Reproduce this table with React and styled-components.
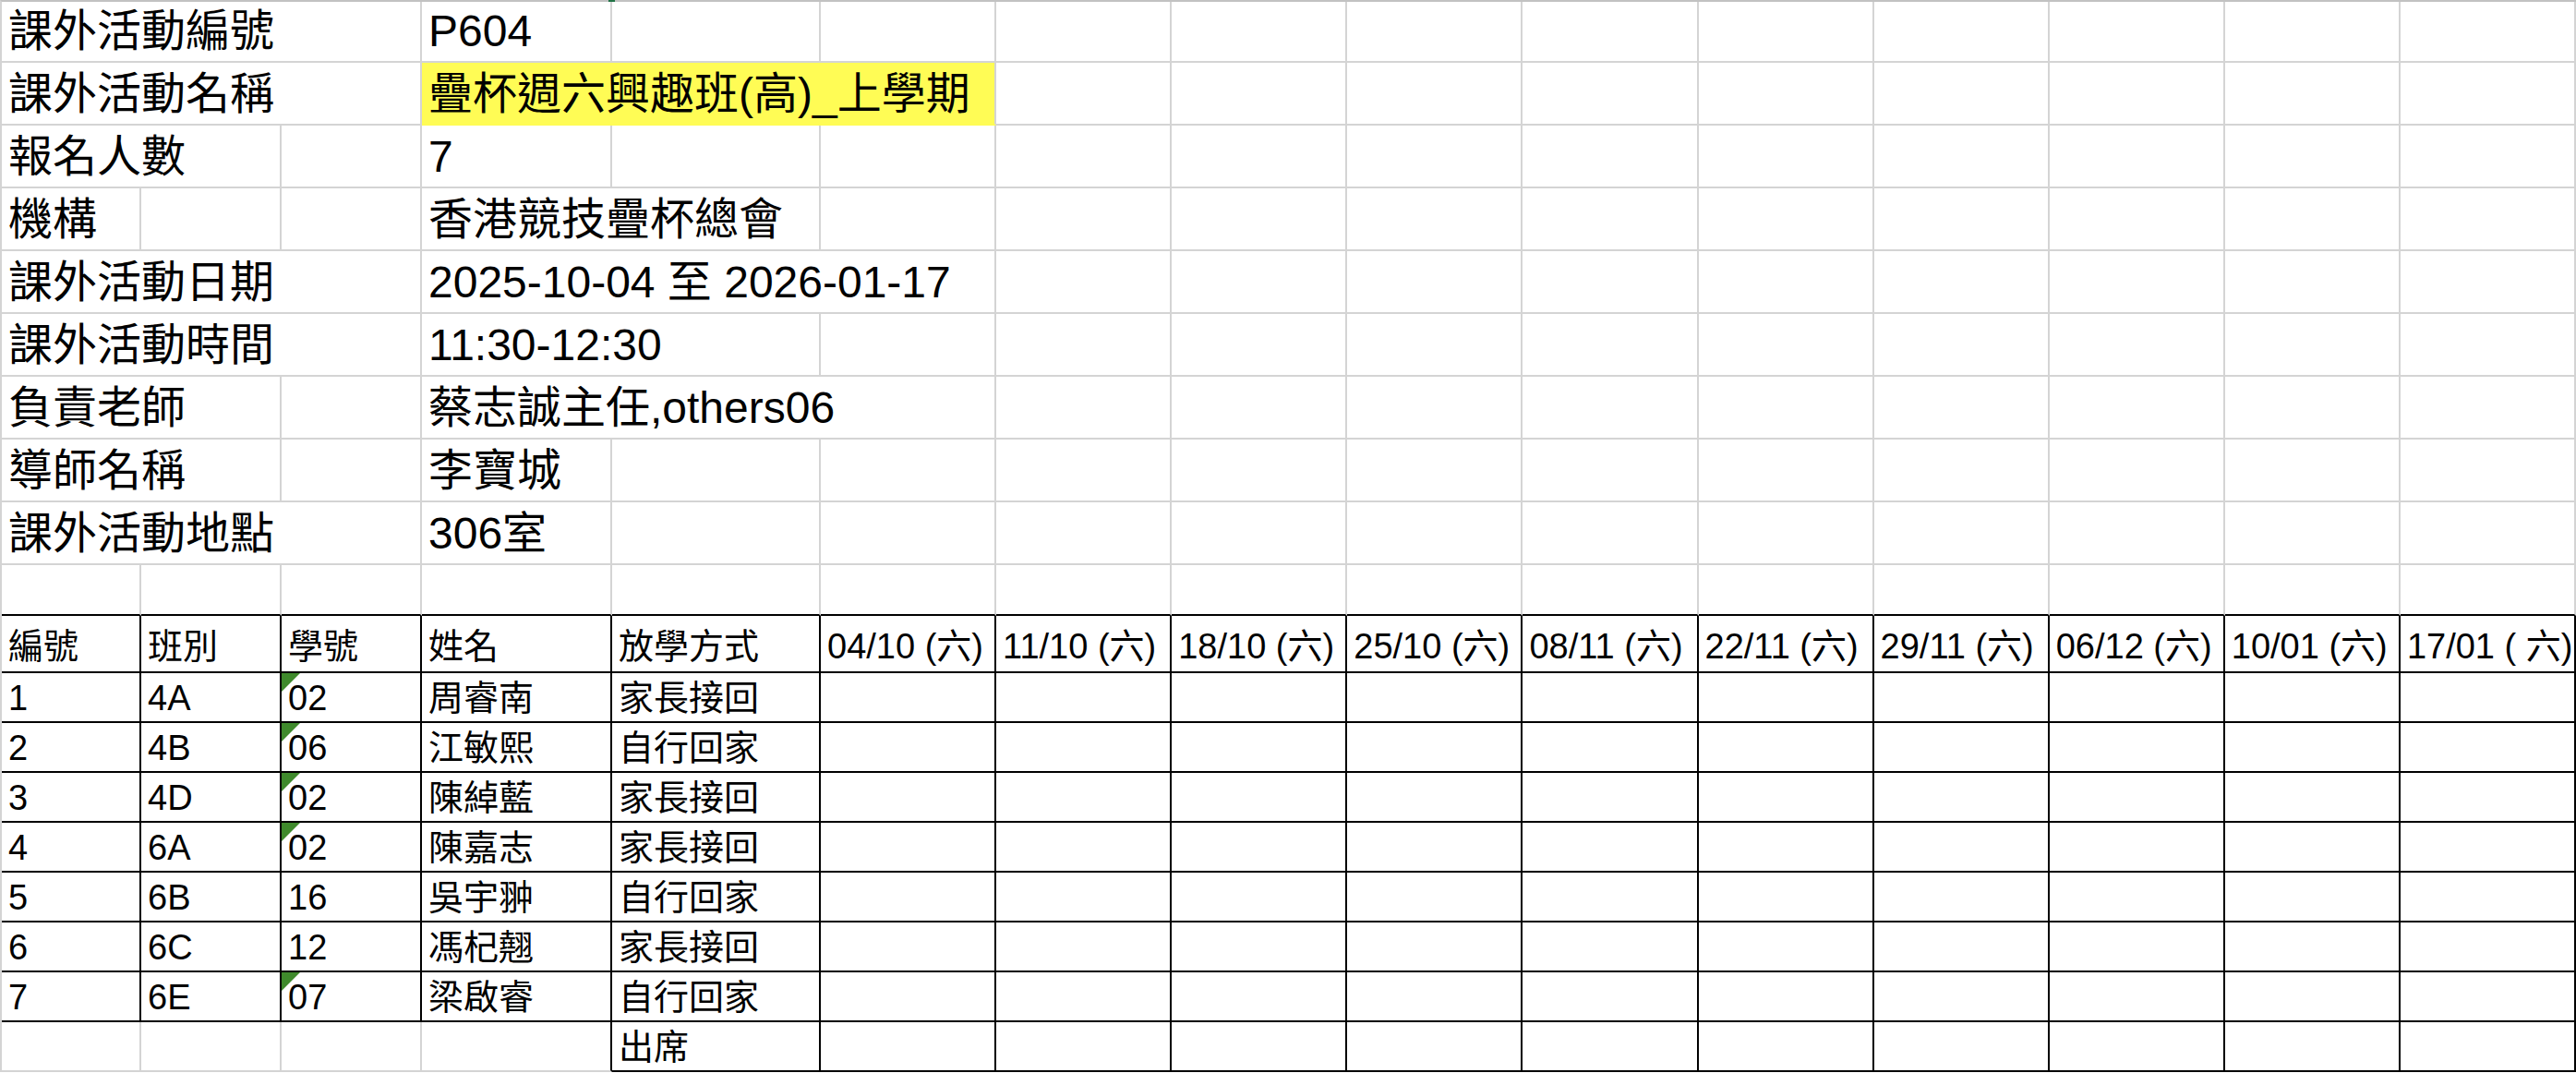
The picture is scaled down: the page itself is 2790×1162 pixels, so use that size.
import React from 'react'
import styled, { createGlobalStyle, css } from 'styled-components'

const GRID = '#d4d4d4'
const INK = '#000'

const GlobalStyle = createGlobalStyle`
  html, body {
    margin: 0;
    padding: 0;
    background: #fff;
    overflow: hidden;
  }
  body {
    font-family: "Liberation Sans", "Noto Sans CJK TC", sans-serif;
    color: #000;
  }
`

const Sheet = styled.div`
  position: relative;
  box-sizing: border-box;
  width: 2790px;
  border-top: 2px solid #c2c2c2;
  border-left: 2px solid ${GRID};
  display: grid;
  grid-template-columns: 151px 152px 152px 206px 226px repeat(10, 1fr);
  grid-template-rows: 66px repeat(8, 68px) 55px 62px repeat(8, 54px);
`

// little green tick Excel draws on the selected column edge
const Marker = styled.div`
  position: absolute;
  top: -2px;
  left: 657px;
  width: 7px;
  height: 2px;
  background: #217346;
`

const Cell = styled.div`
  position: relative;
  box-sizing: border-box;
  grid-column: span ${p => p.$span || 1};
  display: flex;
  align-items: flex-end;
  padding-left: 7px;
  border-right: 2px solid ${p => p.$right || GRID};
  border-bottom: 2px solid ${p => p.$bottom || GRID};
  background: ${p => p.$bg || 'transparent'};
  line-height: 1;
  white-space: nowrap;
  min-width: 0;

  ${p => p.$flag && css`
    &::before {
      content: '';
      position: absolute;
      left: 0;
      top: 0;
      width: 20px;
      height: 20px;
      background: #3f8a2c;
      clip-path: polygon(0 0, 100% 0, 0 100%);
    }
  `}
`

const InfoCell = styled(Cell)`
  font-size: 48px;
  padding-bottom: 8px;
`

const HeadCell = styled(Cell)`
  font-size: 38px;
  padding-bottom: 8px;
`

const BodyCell = styled(Cell)`
  font-size: 38px;
  padding-bottom: 6px;
`

const info = [
  { label: '課外活動編號', labelSpan: 3, value: 'P604', valueSpan: 1 },
  { label: '課外活動名稱', labelSpan: 3, value: '疊杯週六興趣班(高)_上學期', valueSpan: 3, highlight: true },
  { label: '報名人數', labelSpan: 2, value: '7', valueSpan: 1 },
  { label: '機構', labelSpan: 1, value: '香港競技疊杯總會', valueSpan: 2 },
  { label: '課外活動日期', labelSpan: 3, value: '2025-10-04 至 2026-01-17', valueSpan: 3 },
  { label: '課外活動時間', labelSpan: 3, value: '11:30-12:30', valueSpan: 2 },
  { label: '負責老師', labelSpan: 2, value: '蔡志誠主任,others06', valueSpan: 3 },
  { label: '導師名稱', labelSpan: 2, value: '李寶城', valueSpan: 1 },
  { label: '課外活動地點', labelSpan: 3, value: '306室', valueSpan: 1 },
]

const headers = ['編號', '班別', '學號', '姓名', '放學方式']
const dates = [
  '04/10 (六)', '11/10 (六)', '18/10 (六)', '25/10 (六)', '08/11 (六)',
  '22/11 (六)', '29/11 (六)', '06/12 (六)', '10/01 (六)', '17/01 ( 六)',
]

const students = [
  { no: '1', cls: '4A', id: '02', name: '周睿南', way: '家長接回', flag: true },
  { no: '2', cls: '4B', id: '06', name: '江敏熙', way: '自行回家', flag: true },
  { no: '3', cls: '4D', id: '02', name: '陳綽藍', way: '家長接回', flag: true },
  { no: '4', cls: '6A', id: '02', name: '陳嘉志', way: '家長接回', flag: true },
  { no: '5', cls: '6B', id: '16', name: '吳宇翀', way: '自行回家' },
  { no: '6', cls: '6C', id: '12', name: '馮杞翹', way: '家長接回' },
  { no: '7', cls: '6E', id: '07', name: '梁啟睿', way: '自行回家', flag: true },
]

const blanks = n => Array.from({ length: n }, (_, i) => i)

function InfoRow({ row }) {
  const fill = row.highlight ? '#fffc55' : undefined
  return (
    <>
      <InfoCell $span={row.labelSpan}>{row.label}</InfoCell>
      {blanks(3 - row.labelSpan).map(i => <InfoCell key={'l' + i} />)}
      <InfoCell $span={row.valueSpan} $bg={fill} $bottom={fill}>{row.value}</InfoCell>
      {blanks(12 - row.valueSpan).map(i => <InfoCell key={'v' + i} />)}
    </>
  )
}

function App() {
  return (
    <>
      <GlobalStyle />
      <Sheet>
        <Marker />
        {info.map(row => <InfoRow key={row.label} row={row} />)}

        {blanks(15).map(i => <InfoCell key={'gap' + i} $bottom={INK} />)}

        {headers.map(h => <HeadCell key={h} $right={INK} $bottom={INK}>{h}</HeadCell>)}
        {dates.map(d => <HeadCell key={d} $right={INK} $bottom={INK}>{d}</HeadCell>)}

        {students.map(s => (
          <React.Fragment key={s.no}>
            <BodyCell $right={INK} $bottom={INK}>{s.no}</BodyCell>
            <BodyCell $right={INK} $bottom={INK}>{s.cls}</BodyCell>
            <BodyCell $right={INK} $bottom={INK} $flag={s.flag}>{s.id}</BodyCell>
            <BodyCell $right={INK} $bottom={INK}>{s.name}</BodyCell>
            <BodyCell $right={INK} $bottom={INK}>{s.way}</BodyCell>
            {blanks(10).map(i => <BodyCell key={i} $right={INK} $bottom={INK} />)}
          </React.Fragment>
        ))}

        <BodyCell />
        <BodyCell />
        <BodyCell />
        <BodyCell $right={INK} />
        <BodyCell $right={INK} $bottom={INK}>出席</BodyCell>
        {blanks(10).map(i => <BodyCell key={'att' + i} $right={INK} $bottom={INK} />)}
      </Sheet>
    </>
  )
}

export default App
